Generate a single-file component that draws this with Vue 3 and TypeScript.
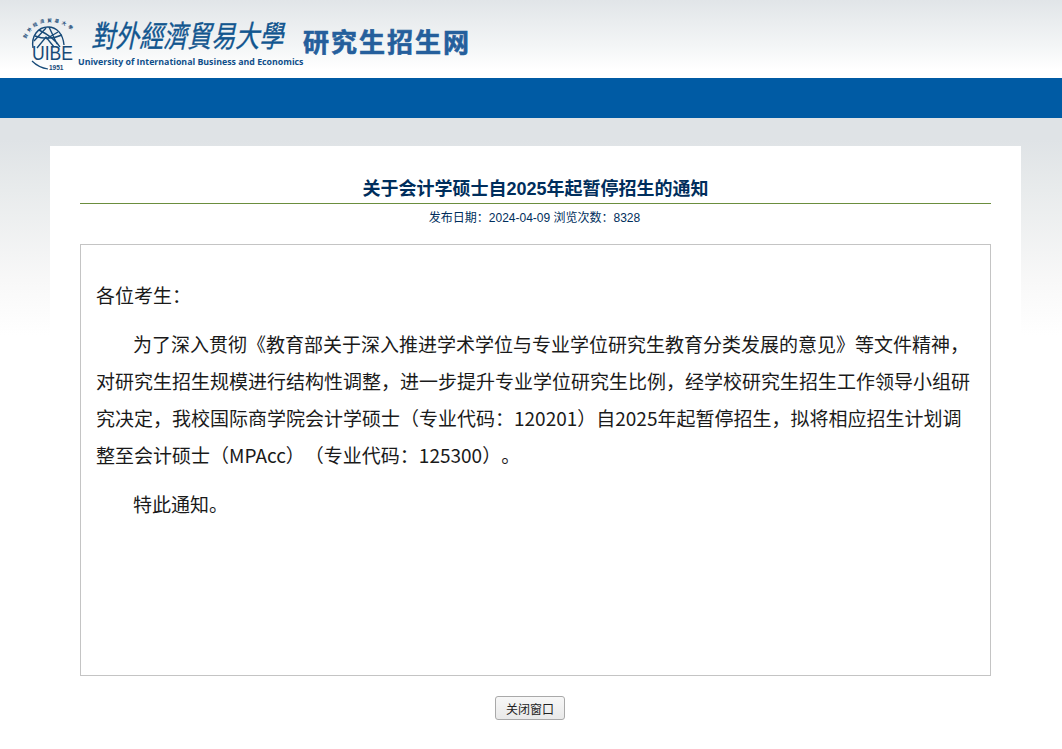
<template>
  <div class="page">
    <header class="top">
      <div class="brand">
        <svg class="emblem" width="56" height="56" viewBox="0 0 56 56" aria-hidden="true">
          <defs>
            <path id="seal-arc" d="M4 24 C9 12 18 7 28 7 C39 7 48 12 54 21" />
          </defs>
          <text class="seal-text"><textPath href="#seal-arc">{{ sealName }}</textPath></text>
          <g fill="none" stroke="#174a78" stroke-width="1.4">
            <path d="M11 33 C9 21 16 12 26 12 C35 12 41 19 42 30" />
            <path d="M12 26 L24 13 M15 33 L24 22 L32 32" />
            <path d="M17 15 C25 19 33 24 38 32 M27 12 L35 29 M36 17 L24 24" />
            <path d="M13 21 C21 24 31 24 40 20" />
          </g>
          <text class="seal-mark" x="10" y="45" textLength="41" lengthAdjust="spacingAndGlyphs">UIBE</text>
          <path d="M10 46 C14 50 19 53 26 54" fill="none" stroke="#174a78" stroke-width="1.2" />
          <text class="seal-year" x="27" y="54.5">1951</text>
        </svg>
        <div class="wordmark">
          <div class="callig">{{ schoolName }}</div>
          <div class="english">University of International Business and Economics</div>
        </div>
        <div class="site-name">研究生招生网</div>
      </div>
    </header>
    <div class="nav-bar"></div>
    <main class="card">
      <h1 class="title">{{ notice.title }}</h1>
      <p class="meta">发布日期：{{ notice.date }} 浏览次数：{{ notice.views }}</p>
      <section class="content">
        <p class="greet">各位考生：</p>
        <p v-for="(para, index) in notice.paragraphs" :key="index" class="para">{{ para }}</p>
      </section>
      <div class="actions">
        <button type="button" class="close-btn">关闭窗口</button>
      </div>
    </main>
  </div>
</template>

<script setup lang="ts">
interface Notice {
  title: string
  date: string
  views: number
  paragraphs: string[]
}

const schoolName = '對外經濟貿易大學'
const sealName = '對外經濟貿易大學'

const notice: Notice = {
  title: '关于会计学硕士自2025年起暂停招生的通知',
  date: '2024-04-09',
  views: 8328,
  paragraphs: [
    '为了深入贯彻《教育部关于深入推进学术学位与专业学位研究生教育分类发展的意见》等文件精神，对研究生招生规模进行结构性调整，进一步提升专业学位研究生比例，经学校研究生招生工作领导小组研究决定，我校国际商学院会计学硕士（专业代码：120201）自2025年起暂停招生，拟将相应招生计划调整至会计硕士（MPAcc）（专业代码：125300）。',
    '特此通知。',
  ],
}
</script>

<style>
html,
body {
  margin: 0;
  background: #fff;
}
</style>

<style scoped>
.page {
  height: 749px;
  overflow: hidden;
  font-family: "Liberation Sans", "Noto Sans CJK SC", sans-serif;
  background: linear-gradient(#dfe3e6 0, #dfe3e6 140px, #e8ebec 190px, #f8f8f8 280px, #fff 335px) no-repeat;
}

.top {
  height: 78px;
  background: linear-gradient(#e1e5e8, #f3f5f6 45px, #fff 70px);
}

.brand {
  display: flex;
  align-items: flex-start;
  padding: 15px 0 0 22px;
}

.emblem {
  flex: none;
  overflow: visible;
}

.seal-text {
  font: 700 4.5px "Noto Sans CJK TC", sans-serif;
  fill: #174a78;
  letter-spacing: 2.6px;
}

.seal-mark {
  font: 400 20px "Liberation Sans", sans-serif;
  fill: #174a78;
}

.seal-year {
  font: 700 6.5px "Liberation Sans", sans-serif;
  fill: #174a78;
}

.wordmark {
  width: 226px;
  flex: none;
}

.callig {
  margin-left: 16px;
  height: 38px;
  font: 400 24px/38px "Noto Sans CJK TC", sans-serif;
  color: #12568f;
  -webkit-text-stroke: 0.3px #12568f;
  white-space: nowrap;
  transform: skewX(-12deg) scaleY(1.25);
  transform-origin: left center;
}

.english {
  margin-top: 3px;
  font: 700 8.8px/12px "Open Sans", sans-serif;
  color: #104f8a;
  white-space: nowrap;
}

.site-name {
  margin: 9px 0 0 -1px;
  font: 700 26px/34px "Noto Sans CJK SC", sans-serif;
  letter-spacing: 2px;
  color: #255f9c;
  -webkit-text-stroke: 0.6px #255f9c;
}

.nav-bar {
  height: 40px;
  background: #005ba4;
}

.card {
  width: 911px;
  margin: 28px 0 0 50px;
  padding: 0 30px;
  background: #fff;
  min-height: 603px;
}

.title {
  margin: 0;
  padding: 31px 0 2px;
  font-size: 18px;
  line-height: 24px;
  font-weight: 700;
  text-align: center;
  color: #002e5c;
  border-bottom: 1px solid #6b8e3e;
}

.meta {
  margin: 0;
  padding-top: 6px;
  height: 34px;
  box-sizing: border-box;
  font-size: 12px;
  line-height: 16px;
  text-align: center;
  color: #002e5c;
  transform: translateX(-1px);
}

.content {
  box-sizing: border-box;
  height: 432px;
  margin-top: 6px;
  padding: 31px 15px 0;
  border: 1px solid #c4c4c4;
  font-family: "Noto Sans CJK SC", sans-serif;
  font-size: 19px;
  line-height: 37px;
  color: #1a1a1a;
  text-spacing-trim: space-all;
}

.greet,
.para {
  margin: 0 0 12px;
}

.para {
  text-indent: 37px;
}

.actions {
  display: flex;
  justify-content: center;
  padding: 20px 11px 0 0;
}

.close-btn {
  width: 70px;
  height: 24px;
  padding: 0;
  border: 1px solid #a9a9a9;
  border-radius: 3px;
  background: linear-gradient(#f7f7f7, #e9e9e9);
  font: 400 12px "Noto Sans CJK SC", sans-serif;
  color: #222;
}
</style>
